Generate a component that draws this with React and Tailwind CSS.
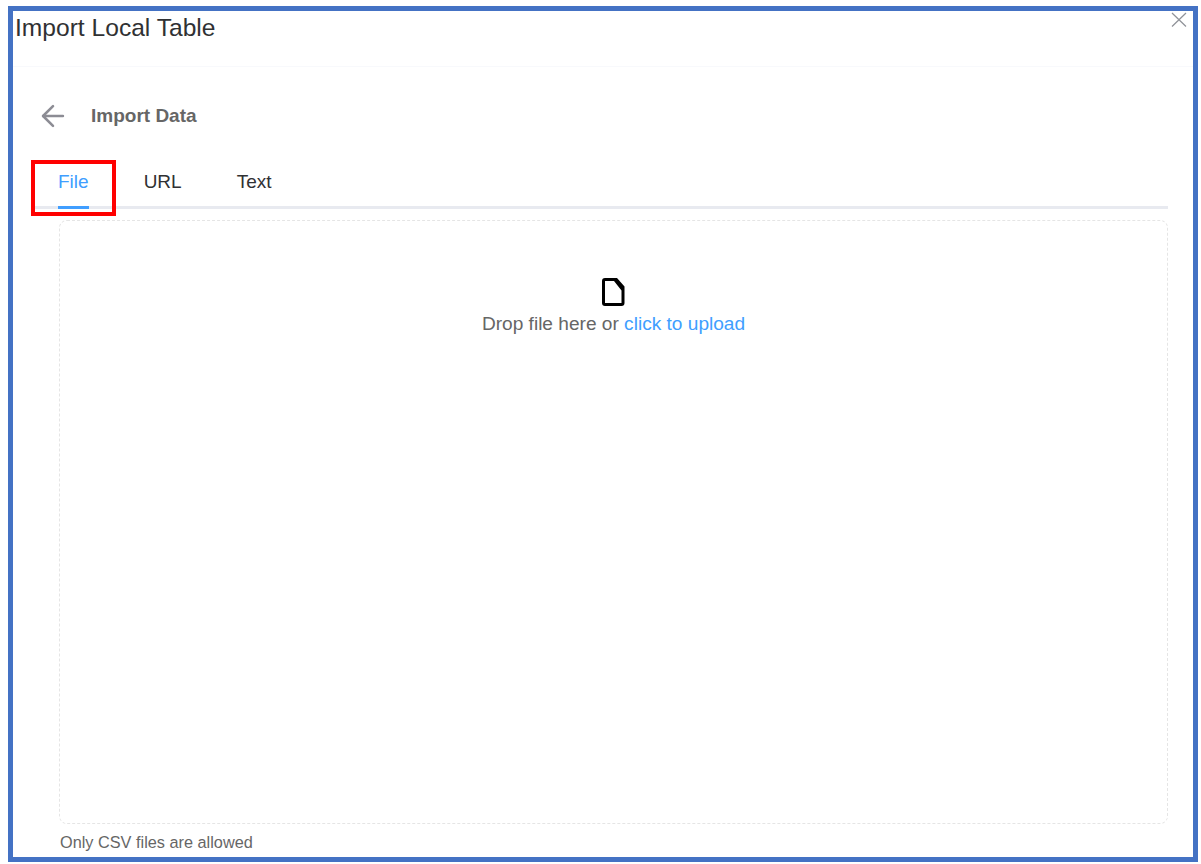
import { ArrowLeft } from "lucide-react";

const tabs = ["File", "URL", "Text"];

const App = () => {
  return (
    <div className="h-[864px] w-[1201px] overflow-hidden bg-white pl-2 pt-1.5 font-['Liberation_Sans',Arial,sans-serif]">
      <div className="relative flex h-[856px] w-[1190px] flex-col border-[5px] border-[#4472c4] bg-white">
        <svg className="absolute right-[6px] top-[1px]" width="16" height="16" viewBox="0 0 16 16" fill="none" stroke="#909399" strokeWidth="1.25">
          <path d="M1 1l14 13.5M15 1L1 14.5" />
        </svg>

        <header className="h-[56px] border-b border-[#f8f9fc] pl-0.5 text-[24.6px] leading-[33px] text-[#303133]">
          Import Local Table
        </header>

        <div className="flex flex-1 flex-col pl-5 pr-[25px]">
          <div className="mt-[31px] flex h-[36px] items-center">
            <ArrowLeft className="ml-[3px] h-[34px] w-[34px] text-[#8c8c94]" strokeWidth={1.8} />
            <h2 className="ml-[21px] text-[19px] font-bold text-[#666666]">Import Data</h2>
          </div>

          <div className="relative mt-[26px] flex h-[49px] border-b-[3px] border-[#e8eaf0] pl-[25px] text-[19px] leading-[44px] text-[#303133]">
            {tabs.map((tab, i) => (
              <div key={tab} className={i === 0 ? "relative mr-[55px] text-[#409eff]" : i === 1 ? "mr-[55px]" : ""}>
                {tab}
                {i === 0 && <div className="absolute -bottom-[3px] left-0 h-[3px] w-full bg-[#409eff]" />}
              </div>
            ))}
            <div className="absolute -left-[2px] top-0 h-[56px] w-[85px] border-4 border-[#ff0000]" />
          </div>

          <div className="ml-[26px] mt-[11px] flex h-[604px] flex-col items-center rounded-lg border border-dashed border-[#e5e5e5] pt-[57px]">
            <svg width="23" height="28" viewBox="0 0 23 28" fill="#000">
              <path
                fillRule="evenodd"
                d="M3 0h12l7.5 8.5V25a3 3 0 0 1-3 3H3a3 3 0 0 1-3-3V3a3 3 0 0 1 3-3ZM3 3v22h16.5V12.5L12 3Z"
              />
            </svg>
            <p className="mt-[6px] text-[19.1px] leading-[24px] text-[#666666]">
              Drop file here or <span className="text-[#409eff]">click to upload</span>
            </p>
          </div>

          <p className="ml-[27px] mt-[8px] text-[16.3px] leading-[20px] text-[#666666]">Only CSV files are allowed</p>
        </div>
      </div>
    </div>
  );
};

export default App;
